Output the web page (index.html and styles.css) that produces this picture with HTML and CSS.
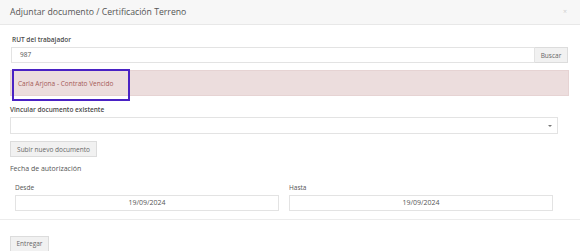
FILE: index.html
```html
<!DOCTYPE html>
<html lang="es">
<head>
<meta charset="utf-8">
<title>Adjuntar documento</title>
<link rel="stylesheet" href="styles.css">
</head>
<body>
<div class="modal">
  <div class="modal-header">
    <span class="modal-title">Adjuntar documento / Certificación Terreno</span>
    <span class="close">×</span>
  </div>
  <div class="modal-body">
    <div class="group group-rut">
      <div class="label bold">RUT del trabajador</div>
      <div class="input-group">
        <div class="input">987</div>
        <div class="btn btn-addon">Buscar</div>
      </div>
    </div>
    <div class="alert">
      <span class="alert-text">Carla Arjona - Contrato Vencido</span>
    </div>
    <div class="label bold label-vincular">Vincular documento existente</div>
    <div class="select"><span class="caret"></span></div>
    <div class="btn btn-upload">Subir nuevo documento</div>
    <div class="label label-fecha">Fecha de autorización</div>
    <div class="row">
      <div class="col">
        <div class="label">Desde</div>
        <div class="input input-date">19/09/2024</div>
      </div>
      <div class="col">
        <div class="label">Hasta</div>
        <div class="input input-date">19/09/2024</div>
      </div>
    </div>
  </div>
  <div class="modal-footer">
    <div class="btn btn-submit">Entregar</div>
  </div>
</div>
</body>
</html>
```
FILE: styles.css
```css
* { box-sizing: border-box; }
html, body { margin: 0; padding: 0; background: #fff; }
body {
  font-family: "Open Sans", "Noto Sans", sans-serif;
  color: #555;
  width: 580px;
  height: 251px;
  overflow: hidden;
}
.modal { width: 580px; }
.modal-header {
  height: 25px;
  background: #f7f7f7;
  border-bottom: 1px solid #e8e8e8;
  display: flex;
  align-items: center;
  justify-content: space-between;
  padding: 0 13px 0 10px;
}
.modal-title {
  font-size: 8.7px;
  color: #555;
  line-height: 12px;
}
.close {
  font-size: 7px;
  color: #cfcfcf;
  line-height: 10px;
}
.modal-body {
  padding: 10px 10px 8px 10px;
  border-bottom: 1px solid #ececec;
}
.label {
  font-size: 6.5px;
  line-height: 10px;
  color: #555;
}
.bold { font-weight: 600; color: #4a4a4a; }
.group-rut { padding-left: 1px; }
.group-rut .label { padding-left: 1px; }
.input-group {
  display: flex;
  margin-top: 2px;
  margin-right: 2px;
}
.input {
  flex: 1;
  height: 16px;
  border: 1px solid #e3e3e3;
  font-size: 6.5px;
  line-height: 14px;
  padding-left: 8px;
  color: #555;
  background: #fff;
}
.btn {
  display: inline-flex;
  align-items: center;
  justify-content: center;
  background: #f1f1f1;
  border: 1px solid #dcdcdc;
  font-size: 6.5px;
  color: #666;
  height: 16px;
}
.btn-addon {
  width: 33px;
  border-left: none;
}
.alert {
  margin-top: 7px;
  height: 26px;
  background: #ecdddd;
  border: 1px solid #e6d3d3;
  position: relative;
  display: flex;
  align-items: center;
  padding-left: 7px;
  margin-right: 1px;
}
.alert-text {
  font-size: 6.5px;
  color: #a45a56;
  position: relative;
}
.alert::before {
  content: "";
  position: absolute;
  left: 1px;
  top: -2px;
  width: 114px;
  height: 28px;
  border: 2px solid #4a22c4;
}
.label-vincular { margin-top: 9px; }
.select {
  margin-top: 2px;
  height: 17px;
  width: 548px;
  border: 1px solid #e3e3e3;
  position: relative;
}
.caret {
  position: absolute;
  right: 5px;
  top: 7px;
  width: 0;
  height: 0;
  border-left: 2px solid transparent;
  border-right: 2px solid transparent;
  border-top: 2px solid #777;
}
.btn-upload {
  margin-top: 7px;
  width: 87px;
}
.label-fecha { margin-top: 7px; font-size: 7px; }
.row {
  display: flex;
  width: 548px;
  margin-top: 9px;
}
.col {
  flex: 1;
  padding: 0 5px;
}
.col .label { line-height: 10px; }
.input-date {
  margin-top: 2px;
  text-align: center;
  padding-left: 0;
  font-size: 7px;
}
.modal-footer {
  padding: 9px 10px;
}
.btn-submit { width: 39px; }
```
